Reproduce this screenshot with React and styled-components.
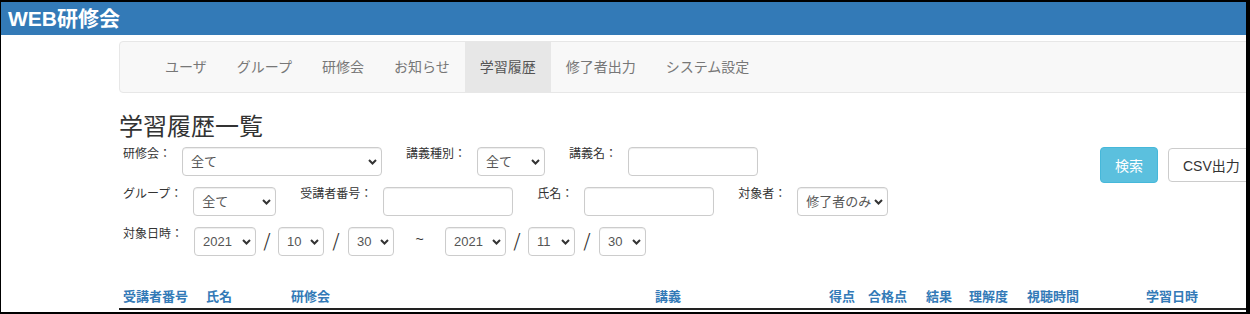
import React from "react";
import styled, { createGlobalStyle } from "styled-components";

const GlobalStyle = createGlobalStyle`
  body {
    margin: 0;
    background: #fff;
    font-family: "Liberation Sans", "Noto Sans CJK JP", sans-serif;
    color: #333;
  }
  * { box-sizing: border-box; }
`;

const Frame = styled.div`
  width: 1250px;
  height: 314px;
  border-style: solid;
  border-color: #000;
  border-width: 2px 4px 2px 1px;
  overflow: hidden;
  background: #fff;
`;

const Header = styled.header`
  height: 33px;
  background: #337ab7;
  color: #fff;
  font-size: 21px;
  font-weight: 700;
  display: flex;
  align-items: center;
  padding: 0 0 4px 7px;
`;

const Container = styled.div`
  margin-left: 118px;
  width: 1140px;
`;

const Navbar = styled.nav`
  margin-top: 6px;
  height: 52px;
  background: #f8f8f8;
  border: 1px solid #e7e7e7;
  border-radius: 4px;
  display: flex;
  padding-left: 30px;
`;

const NavItem = styled.a`
  display: block;
  padding: 0 15px;
  line-height: 50px;
  font-size: 14px;
  color: ${({ $active }) => ($active ? "#555" : "#777")};
  background: ${({ $active }) => ($active ? "#e7e7e7" : "transparent")};
  text-decoration: none;
`;

const Title = styled.h1`
  margin: 21px 0 7px;
  font-size: 24px;
  font-weight: 400;
  line-height: 1.1;
  color: #333;
`;

const FilterArea = styled.div`
  display: flex;
  align-items: flex-start;
`;

const Fields = styled.div`
  width: 981px;
  padding-left: 4px;
`;

const Row = styled.div`
  display: flex;
  align-items: flex-start;
  height: 29px;
  margin-bottom: 11px;
`;

const Field = styled.div`
  display: flex;
  align-items: flex-start;
  margin-right: 24px;
`;

const Label = styled.span`
  font-size: 12px;
  line-height: 12px;
  margin-top: 1px;
  margin-right: 11px;
  color: #333;
`;

const SelectWrap = styled.div`
  position: relative;
  width: ${({ $w }) => $w}px;
  height: 29px;
`;

const NativeSelect = styled.select`
  appearance: none;
  width: 100%;
  height: 100%;
  border: 1px solid #ccc;
  border-radius: 4px;
  background: #fff;
  padding: 0 14px 0 8px;
  font-family: "Liberation Sans", "Noto Sans CJK JP", sans-serif;
  font-size: 13px;
  color: #555;
  box-shadow: inset 0 1px 1px rgba(0, 0, 0, 0.075);
  outline: none;
`;

const Chevron = styled.svg`
  position: absolute;
  right: 5px;
  top: 12px;
  pointer-events: none;
`;

const TextInput = styled.input`
  width: 130px;
  height: 29px;
  border: 1px solid #ccc;
  border-radius: 4px;
  box-shadow: inset 0 1px 1px rgba(0, 0, 0, 0.075);
  outline: none;
  padding: 0 8px;
`;

const Slash = styled.span`
  width: ${({ $w }) => $w}px;
  text-align: center;
  font-family: "DejaVu Sans", sans-serif;
  font-weight: 200;
  font-size: 22px;
  line-height: 29px;
  color: #333;
`;

const Tilde = styled.span`
  width: 51px;
  text-align: center;
  font-size: 14px;
  line-height: 24px;
  color: #333;
`;

const Buttons = styled.div`
  display: flex;
  gap: 10px;
`;

const Button = styled.button`
  height: ${({ $primary }) => ($primary ? 36 : 34)}px;
  margin-top: ${({ $primary }) => ($primary ? 0 : 1)}px;
  padding: 0 14px;
  border-radius: 4px;
  font-family: "Liberation Sans", "Noto Sans CJK JP", sans-serif;
  font-size: 14px;
  white-space: nowrap;
  border: 1px solid ${({ $primary }) => ($primary ? "#46b8da" : "#ccc")};
  background: ${({ $primary }) => ($primary ? "#5bc0de" : "#fff")};
  color: ${({ $primary }) => ($primary ? "#fff" : "#333")};
`;

const TableHead = styled.div`
  margin-top: 18px;
  display: flex;
  border-bottom: 2px solid #222;
`;

const Th = styled.div`
  width: ${({ $w }) => ($w ? `${$w}px` : "auto")};
  flex: ${({ $w }) => ($w ? "none" : "1")};
  padding-left: 4px;
  height: 23px;
  line-height: 23px;
  font-size: 13px;
  font-weight: 700;
  color: #337ab7;
  white-space: nowrap;
`;

const Select = ({ w, value }) => (
  <SelectWrap $w={w}>
    <NativeSelect defaultValue={value}>
      <option>{value}</option>
    </NativeSelect>
    <Chevron width="9" height="6" viewBox="0 0 9 6">
      <path d="M1 1 L4.5 4.5 L8 1" fill="none" stroke="#333" strokeWidth="2" />
    </Chevron>
  </SelectWrap>
);

const navItems = ["ユーザ", "グループ", "研修会", "お知らせ", "学習履歴", "修了者出力", "システム設定"];

const columns = [
  ["受講者番号", 83],
  ["氏名", 85],
  ["研修会", 364],
  ["講義", 174],
  ["得点", 39],
  ["合格点", 58],
  ["結果", 43],
  ["理解度", 58],
  ["視聴時間", 119],
  ["学習日時", null],
];

export default function App() {
  return (
    <>
      <GlobalStyle />
      <Frame>
        <Header>WEB研修会</Header>
        <Container>
          <Navbar>
            {navItems.map((item) => (
              <NavItem key={item} $active={item === "学習履歴"}>
                {item}
              </NavItem>
            ))}
          </Navbar>
          <Title>学習履歴一覧</Title>
          <FilterArea>
            <Fields>
              <Row>
                <Field>
                  <Label>研修会：</Label>
                  <Select w={200} value="全て" />
                </Field>
                <Field>
                  <Label>講義種別：</Label>
                  <Select w={68} value="全て" />
                </Field>
                <Field>
                  <Label>講義名：</Label>
                  <TextInput />
                </Field>
              </Row>
              <Row>
                <Field>
                  <Label>グループ：</Label>
                  <Select w={83} value="全て" />
                </Field>
                <Field>
                  <Label>受講者番号：</Label>
                  <TextInput />
                </Field>
                <Field>
                  <Label>氏名：</Label>
                  <TextInput />
                </Field>
                <Field>
                  <Label>対象者：</Label>
                  <Select w={91} value="修了者のみ" />
                </Field>
              </Row>
              <Row>
                <Field>
                  <Label>対象日時：</Label>
                  <Select w={62} value="2021" />
                  <Slash $w={22}>/</Slash>
                  <Select w={46} value="10" />
                  <Slash $w={24}>/</Slash>
                  <Select w={46} value="30" />
                  <Tilde>~</Tilde>
                  <Select w={61} value="2021" />
                  <Slash $w={22}>/</Slash>
                  <Select w={47} value="11" />
                  <Slash $w={24}>/</Slash>
                  <Select w={47} value="30" />
                </Field>
              </Row>
            </Fields>
            <Buttons>
              <Button $primary>検索</Button>
              <Button>CSV出力</Button>
            </Buttons>
          </FilterArea>
          <TableHead>
            {columns.map(([name, w]) => (
              <Th key={name} $w={w}>
                {name}
              </Th>
            ))}
          </TableHead>
        </Container>
      </Frame>
    </>
  );
}
